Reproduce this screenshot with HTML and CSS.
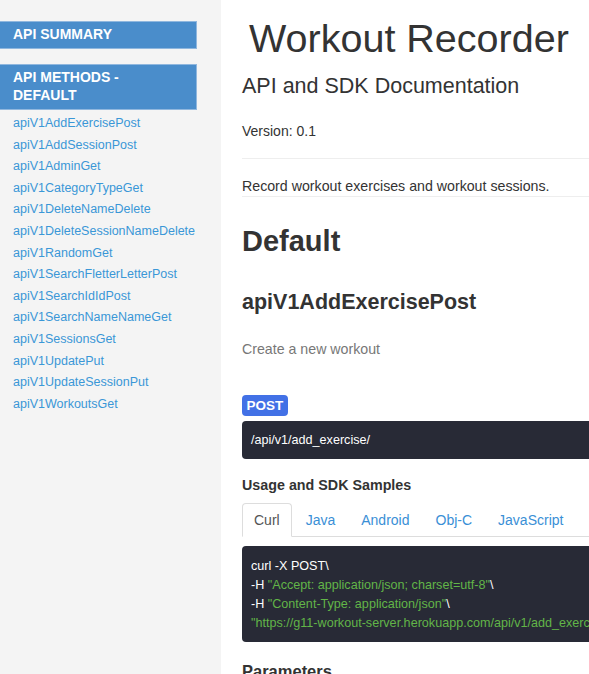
FILE: index.html
```html
<!DOCTYPE html>
<html lang="en">
<head>
<meta charset="utf-8">
<title>Workout Recorder</title>
<link rel="stylesheet" href="styles.css">
</head>
<body>
<div class="page">
  <aside class="sidebar">
    <div class="nav-header">API Summary</div>
    <div class="nav-header second">API Methods - Default</div>
    <ul class="nav-list">
      <li><a href="#">apiV1AddExercisePost</a></li>
      <li><a href="#">apiV1AddSessionPost</a></li>
      <li><a href="#">apiV1AdminGet</a></li>
      <li><a href="#">apiV1CategoryTypeGet</a></li>
      <li><a href="#">apiV1DeleteNameDelete</a></li>
      <li><a href="#">apiV1DeleteSessionNameDelete</a></li>
      <li><a href="#">apiV1RandomGet</a></li>
      <li><a href="#">apiV1SearchFletterLetterPost</a></li>
      <li><a href="#">apiV1SearchIdIdPost</a></li>
      <li><a href="#">apiV1SearchNameNameGet</a></li>
      <li><a href="#">apiV1SessionsGet</a></li>
      <li><a href="#">apiV1UpdatePut</a></li>
      <li><a href="#">apiV1UpdateSessionPut</a></li>
      <li><a href="#">apiV1WorkoutsGet</a></li>
    </ul>
  </aside>
  <main class="content">
    <h1 class="title">Workout Recorder</h1>
    <h2 class="subtitle">API and SDK Documentation</h2>
    <p class="version">Version: 0.1</p>
    <hr class="rule">
    <p class="app-desc">Record workout exercises and workout sessions.</p>
    <h1 class="section">Default</h1>
    <h2 class="method-name">apiV1AddExercisePost</h2>
    <p class="method-summary">Create a new workout</p>
    <span class="badge-post">POST</span>
    <pre class="code path">/api/v1/add_exercise/</pre>
    <h3 class="samples-title">Usage and SDK Samples</h3>
    <ul class="tabs">
      <li class="tab active">Curl</li>
      <li class="tab">Java</li>
      <li class="tab">Android</li>
      <li class="tab">Obj-C</li>
      <li class="tab">JavaScript</li>
    </ul>
    <pre class="code sample">curl -X POST\
-H <span class="str">"Accept: application/json; charset=utf-8"</span>\
-H <span class="str">"Content-Type: application/json"</span>\
<span class="str">"https://g11-workout-server.herokuapp.com/api/v1/add_exercise/"</span></pre>
    <h3 class="params-title">Parameters</h3>
  </main>
</div>
</body>
</html>
```
FILE: styles.css
```css
html, body {
  margin: 0;
  padding: 0;
  background: #ffffff;
}
body {
  font-family: "Liberation Sans", Arial, sans-serif;
  color: #333333;
  font-size: 14px;
  overflow: hidden;
}
.page {
  display: flex;
  min-height: 674px;
}
.sidebar {
  width: 221px;
  flex: 0 0 221px;
  background: #f4f4f4;
  padding-top: 21px;
  box-sizing: border-box;
}
.nav-header {
  width: 197px;
  box-sizing: border-box;
  background: #4a8dcb;
  border: 1px solid #90b7de;
  border-left: none;
  color: #ffffff;
  font-weight: bold;
  font-size: 14px;
  line-height: 18px;
  text-transform: uppercase;
  padding: 3px 20px 5px 13px;
}
.nav-header.second {
  margin-top: 15px;
}
.nav-list {
  list-style: none;
  margin: 3px 0 0 0;
  padding: 0 0 0 13px;
}
.nav-list li {
  line-height: 21.6px;
  font-size: 12.5px;
}
.nav-list a {
  color: #3a97d7;
  text-decoration: none;
}
.content {
  flex: 1;
  min-width: 0;
  overflow: hidden;
  padding-left: 21px;
}
.title {
  font-size: 39.5px;
  font-weight: normal;
  line-height: 44px;
  margin: 16px 0 0 7px;
  color: #333;
  white-space: nowrap;
}
.subtitle {
  font-size: 21.5px;
  font-weight: normal;
  line-height: 24px;
  margin: 14px 0 0 0;
  white-space: nowrap;
}
.version {
  margin: 23px 0 0 0;
  line-height: 20px;
}
.rule {
  border: none;
  border-top: 1px solid #eeeeee;
  margin: 17px 0 0 0;
  height: 0;
}
.app-desc {
  margin: 17px 0 0 0;
  line-height: 20px;
  font-size: 14.2px;
  border-bottom: 1px solid #eeeeee;
  white-space: nowrap;
}
.section {
  font-size: 29px;
  font-weight: bold;
  line-height: 33px;
  margin: 28px 0 0 0;
}
.method-name {
  font-size: 21.5px;
  font-weight: bold;
  line-height: 24px;
  margin: 32px 0 0 0;
}
.method-summary {
  color: #777777;
  font-size: 14.2px;
  margin: 25px 0 0 0;
  line-height: 20px;
}
.badge-post {
  display: inline-block;
  margin-top: 36px;
  background: #4271e6;
  color: #ffffff;
  font-weight: bold;
  font-size: 13.5px;
  line-height: 21px;
  height: 21px;
  padding: 0 4.5px;
  border-radius: 4px;
}
.code {
  background: #282a36;
  color: #ffffff;
  border-radius: 4px;
  font-family: "Liberation Sans", Arial, sans-serif;
  font-size: 12.6px;
  margin: 0;
  white-space: pre;
  overflow: hidden;
}
.code.path {
  margin-top: 5px;
  line-height: 18px;
  padding: 10px 9px;
  width: 600px;
}
.samples-title {
  font-size: 14.3px;
  font-weight: bold;
  line-height: 20px;
  margin: 16px 0 0 0;
}
.tabs {
  list-style: none;
  margin: 8px 0 0 0;
  padding: 0;
  display: flex;
  border-bottom: 1px solid #dddddd;
  width: 600px;
}
.tab {
  font-size: 14px;
  line-height: 20px;
  padding: 6px 11px;
  margin-right: 2px;
  margin-bottom: -1px;
  border: 1px solid transparent;
  border-radius: 4px 4px 0 0;
  color: #3a8fd6;
}
.tab.active {
  color: #555555;
  background: #ffffff;
  border-color: #dddddd;
  border-bottom-color: #ffffff;
}
.code.sample {
  margin-top: 9px;
  line-height: 19px;
  padding: 10.5px 9px 9px;
  width: 600px;
}
.str {
  color: #62b548;
}
.params-title {
  font-size: 16.5px;
  font-weight: bold;
  line-height: 22px;
  margin: 18px 0 0 0;
}
```
